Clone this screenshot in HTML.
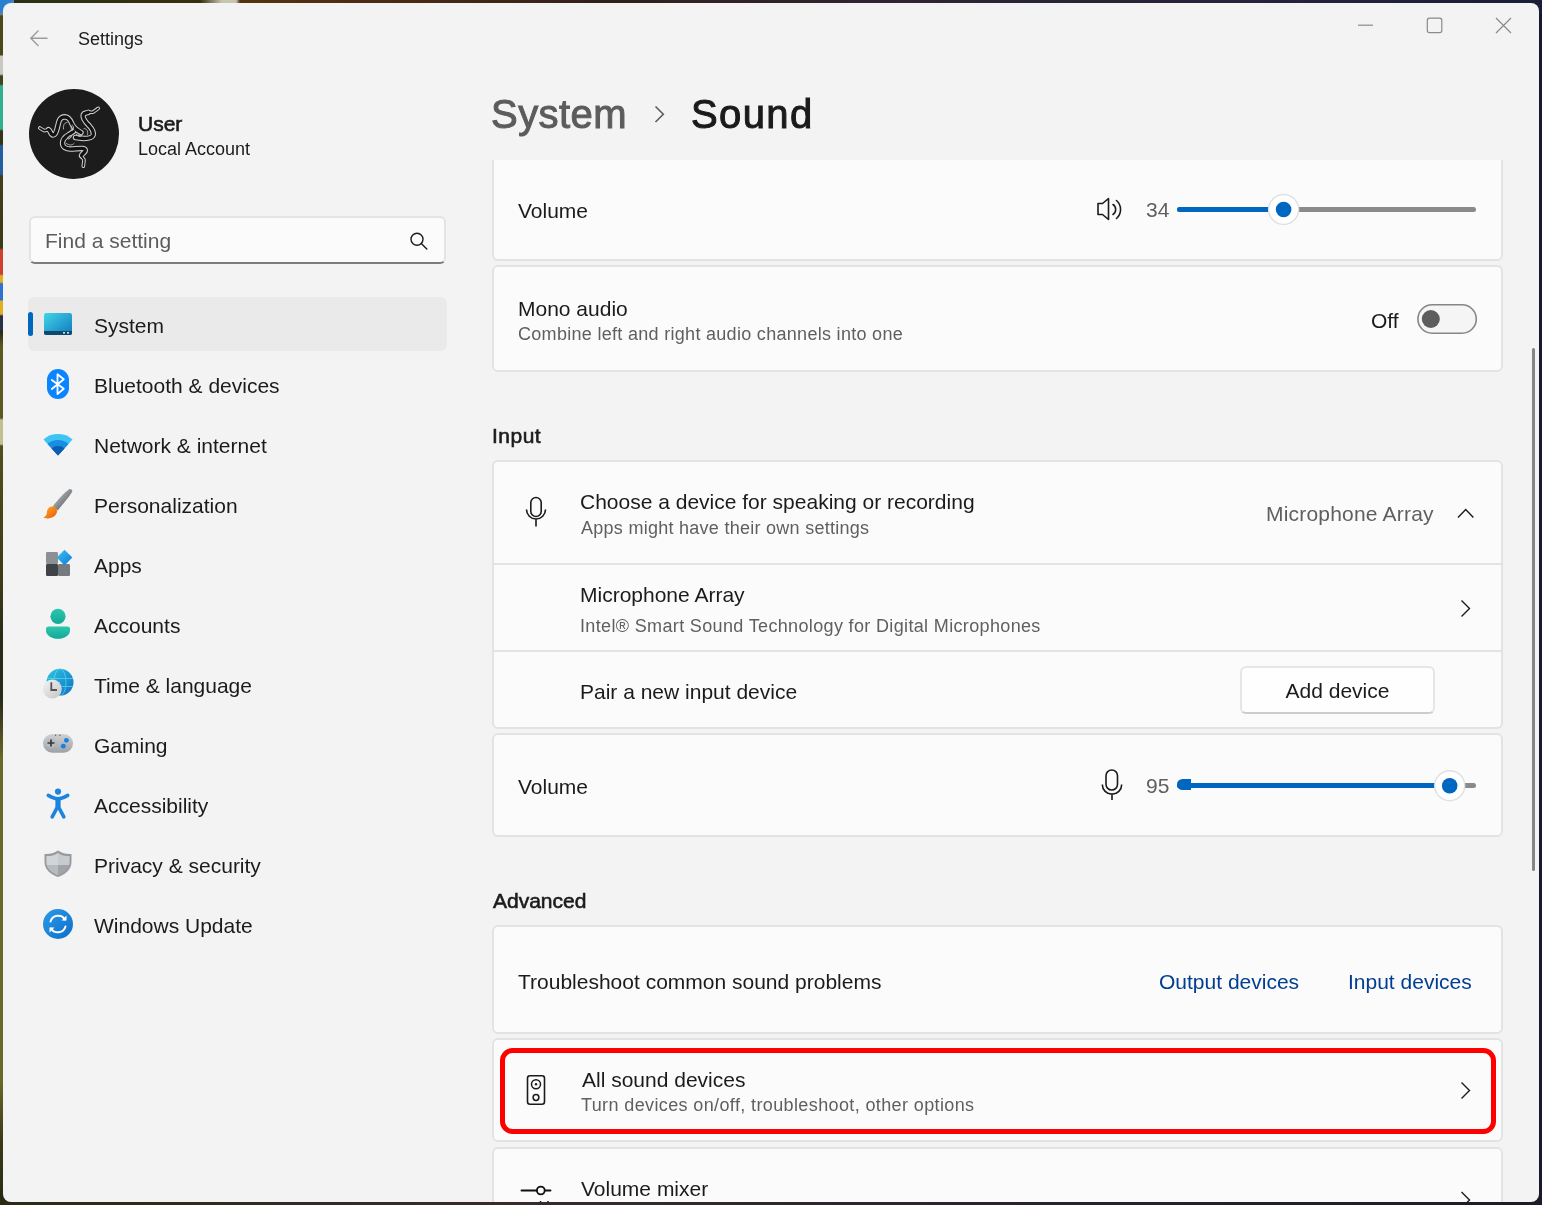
<!DOCTYPE html>
<html><head><meta charset="utf-8">
<style>
*{margin:0;padding:0;box-sizing:border-box}
html,body{width:1542px;height:1205px;overflow:hidden;background:#1d1a14;font-family:"Liberation Sans",sans-serif}
.a{position:absolute}
.t{position:absolute;will-change:transform;white-space:nowrap;line-height:1;color:#1b1b1b}
.f21{font-size:21px}
.f18{font-size:18px}
.sec{color:#5f5f5f}
.b{font-weight:bold}
#win{position:absolute;left:3px;top:3px;width:1536px;height:1199px;background:#f3f3f3;border-radius:8px;overflow:hidden}
.card{position:absolute;left:492px;width:1011px;background:#fbfbfb;border:2px solid #e3e3e3;border-radius:6px}
.div{position:absolute;left:494px;width:1007px;height:2px;background:#e3e3e3}
svg{position:absolute;overflow:visible}
</style></head><body>
<!-- desktop strips -->
<div class="a" style="left:0;top:0;width:1542px;height:4px;background:linear-gradient(90deg,#2a6ab8 0px,#2a6ab8 6px,#2c3012 10px,#34300f 200px,#c8c4b0 222px,#c8c4b0 236px,#55330f 240px,#4a2a14 400px,#32201c 600px,#2e2432 900px,#24223c 1300px,#1a1e36 1542px)"></div>
<div class="a" style="left:0;top:0;width:4px;height:1205px;background:linear-gradient(180deg,#2a80d0 0px,#8a9090 14px,#4a4a18 16px,#4a4a18 55px,#c8c8c0 56px,#c8c8c0 74px,#44441a 76px,#44441a 84px,#30b090 86px,#30b090 129px,#34341a 131px,#34341a 144px,#2060a0 146px,#2060a0 174px,#40401c 176px,#3a3a1a 248px,#d04030 250px,#d04030 274px,#e0b020 276px,#e0b020 282px,#3070d0 284px,#3070d0 300px,#e0b020 301px,#e0b020 314px,#28304a 316px,#28304a 330px,#2a2a14 332px,#5a5a20 346px,#5a5a20 418px,#c0c090 420px,#c0c090 444px,#50501c 446px,#3a3a18 590px,#2a2a18 640px,#2a2a18 700px,#6a6a28 760px,#6a6a28 1080px,#3a3a18 1140px,#2a2a14 1205px)"></div>
<div class="a" style="left:1538px;top:0;width:4px;height:1205px;background:#161a2c"></div>
<div class="a" style="left:0;top:1201px;width:1542px;height:4px;background:linear-gradient(90deg,#2a2a14,#241e18 600px,#1c1c28 1542px)"></div>
<div class="a" style="left:0;top:0;width:14px;height:14px;background:linear-gradient(135deg,#2a80d0 40%,#8a9090 80%)"></div>
<div class="a" style="left:1528px;top:0;width:14px;height:14px;background:#1a1e36"></div>
<div class="a" style="left:0;top:1190px;width:14px;height:15px;background:#2a2a14"></div>
<div class="a" style="left:1528px;top:1190px;width:14px;height:15px;background:#1c1c28"></div>
<div id="win"></div>
<!-- title bar -->
<svg style="left:0;top:0" width="1" height="1"><path d="M47.5 38.2H31M38.5 30.5L30.8 38.2L38.5 46" stroke="#9c9c9c" stroke-width="1.4" fill="none"/></svg>
<div class="t f18" style="left:78px;top:29.5px">Settings</div>
<svg style="left:0;top:0" width="1" height="1">
<path d="M1358 25.2H1373" stroke="#8a8a8a" stroke-width="1.2"/>
<rect x="1427.3" y="18.2" width="14.5" height="14.5" rx="2.2" stroke="#8a8a8a" stroke-width="1.2" fill="none"/>
<path d="M1496 18L1511 33M1511 18L1496 33" stroke="#8a8a8a" stroke-width="1.2"/>
</svg>

<!-- avatar -->
<div class="a" style="left:29px;top:89px;width:90px;height:90px;border-radius:50%;background:#1c1c1c"></div>
<svg style="left:0;top:0" width="1" height="1">
<g fill="none" stroke-linecap="round" stroke-linejoin="round">
<g stroke="#cfcfcf" stroke-width="5.4">
<path id="s1" d="M48.5 129.6C50.5 130.2 50.5 135 53 135C57 135 57.5 124 59.5 120C61 117 63 116.8 65 116.8C69 117 70.5 120 72 124C73.5 127.5 76.5 130 81 132.5"/>
<path id="s2" d="M88.3 112.3C86.5 113.3 84 112.5 83.2 115C82.3 118.5 85.5 122 89 125.5C92 128.8 94 132 93.2 135C92.2 138 88.5 138.5 84 138.5L75.5 137.5"/>
<path id="s3" d="M81.5 155.5C82 153.3 86 152.3 85.2 149.8C84.5 147.8 80 148.5 72 149C66 149.5 62.5 147 62.5 143C62.5 139 65.5 136.5 69 134.5L73.5 131.5"/>
</g>
<g stroke="#cfcfcf" stroke-width="3.6">
<path id="t1" d="M39.8 128L43.5 130.3C45.5 131.5 47 129.2 48.5 129.6"/>
<path id="t2" d="M98.3 108.3L93.5 111.8C91.5 113.2 90 111.3 88.3 112.3"/>
<path id="t3" d="M83.3 166.3L84 160C84 158 81 158 81.5 155.5"/>
</g>
<g stroke="#121212" stroke-width="3.3">
<use href="#s1"/><use href="#s2"/><use href="#s3"/>
</g>
<g stroke="#121212" stroke-width="1.6">
<use href="#t1"/><use href="#t2"/><use href="#t3"/>
</g>
<g stroke="#bbbbbb" stroke-width="0.9">
<ellipse cx="72.3" cy="127.8" rx="1.1" ry="2.6"/><ellipse cx="78.8" cy="135.2" rx="2.5" ry="1.1" transform="rotate(20 78.8 135.2)"/><ellipse cx="69.6" cy="137.2" rx="2.4" ry="1.1" transform="rotate(-40 69.6 137.2)"/>
<path d="M63.5 129C63 125 64.5 122.5 67 122.5M87.5 134.5C88.5 131 86.5 128.5 84 128.5M66.5 143.5C69 145.5 72 145.5 74 143.5"/>
</g>
</g>
</svg>
<div class="t f21" style="left:138px;top:113.2px;-webkit-text-stroke:0.6px #1b1b1b">User</div>
<div class="t f18" style="left:138px;top:140px">Local Account</div>

<!-- search -->
<div class="a" style="left:29px;top:216px;width:417px;height:48px;background:#fbfbfb;border:2px solid #e4e4e4;border-bottom:2px solid #7c7c7c;border-radius:6px"></div>
<div class="t f21" style="left:45px;top:229.8px;color:#5c5c5c">Find a setting</div>
<svg style="left:0;top:0" width="1" height="1"><circle cx="417" cy="239.3" r="6" stroke="#1b1b1b" stroke-width="1.4" fill="none"/><path d="M421.3 243.6L426.8 249" stroke="#1b1b1b" stroke-width="1.4" stroke-linecap="round"/></svg>

<!-- nav -->
<div class="a" style="left:28px;top:297px;width:419px;height:54px;background:#eaeaea;border-radius:6px"></div>
<div class="a" style="left:28px;top:312px;width:5px;height:24px;background:#0067c0;border-radius:3px"></div>
<div class="t f21" style="left:94px;top:315px">System</div>
<div class="t f21" style="left:94px;top:375px">Bluetooth &amp; devices</div>
<div class="t f21" style="left:94px;top:435px">Network &amp; internet</div>
<div class="t f21" style="left:94px;top:495px">Personalization</div>
<div class="t f21" style="left:94px;top:555px">Apps</div>
<div class="t f21" style="left:94px;top:615px">Accounts</div>
<div class="t f21" style="left:94px;top:675px">Time &amp; language</div>
<div class="t f21" style="left:94px;top:735px">Gaming</div>
<div class="t f21" style="left:94px;top:795px">Accessibility</div>
<div class="t f21" style="left:94px;top:855px">Privacy &amp; security</div>
<div class="t f21" style="left:94px;top:915px">Windows Update</div>

<svg style="left:0;top:0" width="1" height="1">
<defs>
<linearGradient id="gSys" x1="0" y1="0" x2="1" y2="1"><stop offset="0" stop-color="#3fd6e8"/><stop offset="1" stop-color="#1377bd"/></linearGradient>
<linearGradient id="gBrush" x1="0.2" y1="0.2" x2="0.8" y2="0.8"><stop offset="0" stop-color="#b4b9be"/><stop offset="1" stop-color="#5e6367"/></linearGradient>
<linearGradient id="gTip" x1="0" y1="0" x2="1" y2="1"><stop offset="0" stop-color="#ffb11f"/><stop offset="1" stop-color="#e8560e"/></linearGradient>
<linearGradient id="gAcc" x1="0" y1="0" x2="0" y2="1"><stop offset="0" stop-color="#2cc7ad"/><stop offset="1" stop-color="#14a898"/></linearGradient>
<linearGradient id="gGlobe" x1="0" y1="0" x2="1" y2="1"><stop offset="0" stop-color="#2fc7e0"/><stop offset="1" stop-color="#0f6fc6"/></linearGradient>
<linearGradient id="gClock" x1="0" y1="0" x2="1" y2="1"><stop offset="0" stop-color="#f4f4f4"/><stop offset="1" stop-color="#c4c4c4"/></linearGradient>
<linearGradient id="gPad" x1="0" y1="0" x2="0" y2="1"><stop offset="0" stop-color="#cfd2d5"/><stop offset="1" stop-color="#9ea2a6"/></linearGradient>
<linearGradient id="gShield" x1="0" y1="0" x2="1" y2="1"><stop offset="0" stop-color="#d6d9dc"/><stop offset="1" stop-color="#7d8186"/></linearGradient>
<linearGradient id="gUpd" x1="0" y1="0" x2="1" y2="1"><stop offset="0" stop-color="#2a9ae8"/><stop offset="1" stop-color="#0f6fc8"/></linearGradient>
<linearGradient id="gDia" x1="0" y1="0" x2="1" y2="1"><stop offset="0" stop-color="#3cc3f7"/><stop offset="1" stop-color="#0f78d4"/></linearGradient>
</defs>
<!-- system -->
<rect x="44" y="313" width="28" height="22" rx="2.2" fill="url(#gSys)"/>
<path d="M44 331H72V333A2 2 0 0 1 70 335H46A2 2 0 0 1 44 333Z" fill="#0e4a6c"/>
<rect x="63" y="332" width="2" height="1.6" fill="#cfe6f0"/><rect x="67" y="332" width="2" height="1.6" fill="#cfe6f0"/>
<!-- bluetooth -->
<rect x="47" y="369" width="22" height="30" rx="11" fill="#0a84ff"/>
<path d="M51.8 389L63.8 379.3L57.5 374.3V394L63.8 388.8L51.8 380" stroke="#fff" stroke-width="1.8" fill="none" stroke-linejoin="round" stroke-linecap="round"/>
<!-- wifi -->
<path d="M43.5 439.5A22 22 0 0 1 72.5 439.5L58 455.5Z" fill="#3cc4f5"/>
<path d="M47.5 444A16 16 0 0 1 68.5 444L58 455.5Z" fill="#1a8de0"/>
<path d="M51.5 448.5A10 10 0 0 1 64.5 448.5L58 455.5Z" fill="#0b5cb3"/>
<!-- brush -->
<path d="M69 489.2C70.5 488.5 72.8 489.5 72.2 491.8C70.2 495.5 63.5 503.5 57.8 510.5L52.8 506.2C58 499.5 64.5 492.5 69 489.2Z" fill="url(#gBrush)"/>
<path d="M51.8 506.6C55.3 506.3 57.3 509 57 511.8C56.5 515.5 52.5 518.4 47.5 518.4C45.5 518.4 44.3 518.2 43.5 517.8C45.3 516.5 46.6 515 46.9 513C47 509.3 48.8 506.8 51.8 506.6Z" fill="url(#gTip)"/>
<!-- apps -->
<rect x="46" y="552" width="12" height="12" rx="1.2" fill="#8c9095"/>
<rect x="46" y="564" width="12" height="12" rx="1.2" fill="#3f4347"/>
<rect x="58" y="564" width="12" height="12" rx="1.2" fill="#767a7f"/>
<path d="M64.5 549.8L72.3 557.6L64.5 565.4L56.7 557.6Z" fill="url(#gDia)"/>
<!-- accounts -->
<circle cx="58" cy="616.3" r="7.6" fill="url(#gAcc)"/>
<path d="M48.5 626.6H67.5A2.5 2.5 0 0 1 70 629.1V630.5C70 635.5 64 638.8 58 638.8C52 638.8 46 635.5 46 630.5V629.1A2.5 2.5 0 0 1 48.5 626.6Z" fill="url(#gAcc)"/>
<!-- time & language -->
<circle cx="60" cy="682.3" r="13.5" fill="url(#gGlobe)"/>
<g stroke="#5fe0f0" stroke-width="0.9" fill="none" opacity="0.75"><ellipse cx="60" cy="682.3" rx="6" ry="13.5"/><path d="M47 678.5H73M47 686.5H73"/></g>
<circle cx="52.3" cy="689" r="9.5" fill="url(#gClock)"/>
<path d="M51.3 682.3V690H57" stroke="#555" stroke-width="1.8" fill="none"/>
<!-- gaming -->
<rect x="43" y="734" width="30" height="18.7" rx="9.3" fill="url(#gPad)"/>
<circle cx="51" cy="743" r="4.8" fill="#b9bcbf"/>
<path d="M51 739.5V746.5M47.5 743H54.5" stroke="#3a3a3a" stroke-width="1.7"/>
<circle cx="66.4" cy="740.3" r="2.4" fill="#1a7ee0"/><circle cx="63.3" cy="746.2" r="2.4" fill="#1a7ee0"/>
<path d="M55 735.3H56.2M59.3 735.3H60.5" stroke="#444" stroke-width="1.1"/>
<!-- accessibility -->
<circle cx="58" cy="791.6" r="3.1" fill="#1a84e0"/>
<path d="M48.3 795.3C52 797.3 55 798.8 58 798.8C61 798.8 64 797.3 67.7 795.3" stroke="#1a84e0" stroke-width="3.6" fill="none" stroke-linecap="round"/>
<path d="M58 799V807" stroke="#1a84e0" stroke-width="5.2" fill="none"/>
<path d="M58 806L52.2 816.8M58 806L63.8 816.8" stroke="#1a84e0" stroke-width="3.6" fill="none" stroke-linecap="round"/>
<!-- shield -->
<clipPath id="shc"><path d="M58 852.9C61.8 855.3 65.5 856.2 69.6 856V862.3C69.6 868.8 64.3 873 58 875.2C51.7 873 46.4 868.8 46.4 862.3V856C50.5 856.2 54.2 855.3 58 852.9Z"/></clipPath>
<path d="M58 850.5C62 853.3 66.5 854.3 71.5 854V862C71.5 869.5 65 874.5 58 877C51 874.5 44.5 869.5 44.5 862V854C49.5 854.3 54 853.3 58 850.5Z" fill="#979b9f"/>
<g clip-path="url(#shc)"><rect x="44" y="850" width="14" height="15" fill="#d2d5d8"/><rect x="58" y="850" width="14" height="15" fill="#c8cbce"/><rect x="44" y="865" width="14" height="14" fill="#b8bbbe"/><rect x="58" y="865" width="14" height="14" fill="#a0a4a8"/></g>
<!-- windows update -->
<circle cx="58" cy="924" r="15" fill="url(#gUpd)"/>
<path d="M50.5 921.5A8 8 0 0 1 65 919.5M65.5 926.5A8 8 0 0 1 51 928.5" stroke="#fff" stroke-width="2" fill="none" stroke-linecap="round"/>
<path d="M66.5 915.5V920.5H61.5Z M49.5 932.5V927.5H54.5Z" fill="#fff"/>
</svg>
<!-- header -->
<div class="t" style="left:491px;top:94.4px;font-size:40px;color:#5c5c5c;-webkit-text-stroke:1px #5c5c5c;letter-spacing:0.45px">System</div>
<svg style="left:0;top:0" width="1" height="1"><path d="M655.5 106.5L663.3 114.2L655.5 122" stroke="#5c5c5c" stroke-width="1.6" fill="none"/></svg>
<div class="t" style="left:691px;top:94.4px;font-size:40px;color:#1a1a1a;-webkit-text-stroke:1px #1a1a1a;letter-spacing:1.4px">Sound</div>

<!-- cards -->
<div class="card" style="top:150px;height:111px"></div>
<div class="a" style="left:488px;top:148px;width:1020px;height:12px;background:#f3f3f3"></div>
<div class="card" style="top:265px;height:107px"></div>
<div class="card" style="top:460px;height:269px"></div>
<div class="div" style="top:563px"></div>
<div class="div" style="top:650px"></div>
<div class="card" style="top:733px;height:104px"></div>
<div class="card" style="top:925px;height:109px"></div>
<div class="card" style="top:1038px;height:104px"></div>
<div class="card" style="top:1147px;height:120px"></div>
<!-- volume -->
<div class="t f21" style="left:518px;top:200.2px">Volume</div>
<svg style="left:0;top:0" width="1" height="1">
<path d="M1098 203.5H1102.5L1108.5 198.5V219.5L1102.5 214.5H1098Z" stroke="#1b1b1b" stroke-width="1.6" fill="none" stroke-linejoin="round"/>
<path d="M1113 204.5A6 6 0 0 1 1113 214.5M1116.5 200.5A12 12 0 0 1 1116.5 218.5" stroke="#1b1b1b" stroke-width="1.6" fill="none" stroke-linecap="round"/>
</svg>
<div class="t f21 sec" style="left:1146px;top:199px">34</div>
<div class="a" style="left:1177px;top:206.5px;width:299px;height:5.5px;border-radius:3px;background:#8a8a8a"></div>
<div class="a" style="left:1177px;top:206.5px;width:107px;height:5.5px;border-radius:3px 0 0 3px;background:#0067c0"></div>
<svg style="left:0;top:0" width="1" height="1"><circle cx="1283.6" cy="209.5" r="15" fill="#fff" stroke="#e0e0e0" stroke-width="1.4"/><circle cx="1283.6" cy="209.5" r="7.8" fill="#0067c0"/></svg>

<!-- mono -->
<div class="t f21" style="left:517.5px;top:298.2px">Mono audio</div>
<div class="t f18 sec" style="left:517.5px;top:324.8px;letter-spacing:0.3px">Combine left and right audio channels into one</div>
<div class="t f21" style="left:1371px;top:309.7px">Off</div>
<svg style="left:0;top:0" width="1" height="1"><rect x="1417.9" y="304.8" width="58.4" height="28.4" rx="14.2" fill="#f5f5f5" stroke="#868686" stroke-width="1.6"/><circle cx="1430.8" cy="319" r="9" fill="#5d5d5d"/></svg>

<!-- input -->
<div class="t f21" style="left:492px;top:425.2px;-webkit-text-stroke:0.6px #1b1b1b;letter-spacing:0.5px">Input</div>
<svg style="left:0;top:0" width="1" height="1">
<rect x="530.8" y="497.5" width="10.4" height="19" rx="5.2" stroke="#1b1b1b" stroke-width="1.6" fill="none"/>
<path d="M526.5 509.5A9.5 9.5 0 0 0 545.5 509.5M536 519V526.5" stroke="#1b1b1b" stroke-width="1.6" fill="none"/>
</svg>
<div class="t f21" style="left:580px;top:491px">Choose a device for speaking or recording</div>
<div class="t f18 sec" style="left:580.5px;top:518.9px;letter-spacing:0.27px">Apps might have their own settings</div>
<div class="t f21 sec" style="right:108px;top:502.6px;letter-spacing:0.2px">Microphone Array</div>
<svg style="left:0;top:0" width="1" height="1"><path d="M1458 517.5L1465.7 509.5L1473.4 517.5" stroke="#1b1b1b" stroke-width="1.4" fill="none"/></svg>

<div class="t f21" style="left:580px;top:584.2px">Microphone Array</div>
<div class="t f18 sec" style="left:579.5px;top:616.8px;letter-spacing:0.35px">Intel® Smart Sound Technology for Digital Microphones</div>
<svg style="left:0;top:0" width="1" height="1"><path d="M1461.5 600.5L1469.5 608.5L1461.5 616.5" stroke="#1b1b1b" stroke-width="1.4" fill="none"/></svg>

<div class="t f21" style="left:579.5px;top:681.2px">Pair a new input device</div>
<div class="a" style="left:1240px;top:666px;width:195px;height:48px;background:#fefefe;border:2px solid #e6e6e6;border-bottom:2px solid #cdcdcd;border-radius:6px"></div>
<div class="t f21" style="left:1241px;width:193px;text-align:center;top:680.2px">Add device</div>

<!-- input volume -->
<div class="t f21" style="left:518px;top:776px">Volume</div>
<svg style="left:0;top:0" width="1" height="1">
<rect x="1106" y="770" width="11.5" height="20" rx="5.75" stroke="#1b1b1b" stroke-width="1.6" fill="none"/>
<path d="M1102.3 784.5A9.7 9.7 0 0 0 1121.7 784.5M1112 794.5V800" stroke="#1b1b1b" stroke-width="1.6" fill="none"/>
</svg>
<div class="t f21 sec" style="left:1146px;top:775px">95</div>
<div class="a" style="left:1177px;top:782.5px;width:299px;height:5.5px;border-radius:3px;background:#8a8a8a"></div>
<div class="a" style="left:1177px;top:782.5px;width:272px;height:5.5px;border-radius:3px 0 0 3px;background:#0067c0"></div>
<div class="a" style="left:1176.5px;top:779px;width:14px;height:11px;border-radius:6px 0 0 6px;background:#0067c0"></div>
<svg style="left:0;top:0" width="1" height="1"><circle cx="1449.7" cy="785.7" r="15" fill="#fff" stroke="#e0e0e0" stroke-width="1.4"/><circle cx="1449.7" cy="785.7" r="7.8" fill="#0067c0"/></svg>

<!-- advanced -->
<div class="t f21" style="left:493px;top:890.2px;-webkit-text-stroke:0.6px #1b1b1b">Advanced</div>
<div class="t f21" style="left:518px;top:971.2px">Troubleshoot common sound problems</div>
<div class="t f21" style="left:1159px;top:971.2px;color:#003e92">Output devices</div>
<div class="t f21" style="left:1348px;top:971.2px;color:#003e92">Input devices</div>

<svg style="left:0;top:0" width="1" height="1">
<rect x="527.5" y="1075.8" width="17" height="28.5" rx="2.5" stroke="#1b1b1b" stroke-width="1.6" fill="none"/>
<circle cx="536" cy="1084.3" r="4.5" stroke="#1b1b1b" stroke-width="1.5" fill="none"/>
<circle cx="536" cy="1084.3" r="1.2" fill="#1b1b1b"/>
<circle cx="536" cy="1097.5" r="2.9" stroke="#1b1b1b" stroke-width="1.5" fill="none"/>
<path d="M1461.5 1082.5L1469.5 1090.5L1461.5 1098.5" stroke="#1b1b1b" stroke-width="1.4" fill="none"/>
</svg>
<div class="t f21" style="left:582px;top:1068.8px">All sound devices</div>
<div class="t f18 sec" style="left:580.5px;top:1096.4px;letter-spacing:0.38px">Turn devices on/off, troubleshoot, other options</div>

<svg style="left:0;top:0" width="1" height="1">
<path d="M521.5 1190.5H536.8M544.8 1190.5H550.5" stroke="#111" stroke-width="1.9" stroke-linecap="round"/>
<circle cx="540.8" cy="1190.5" r="3.9" stroke="#111" stroke-width="1.8" fill="none"/>
<path d="M540.5 1201V1203M548 1201V1203" stroke="#111" stroke-width="1.5"/>
<path d="M1461.5 1192L1469.5 1200L1461.5 1208" stroke="#1b1b1b" stroke-width="1.4" fill="none"/>
</svg>
<div class="t f21" style="left:581px;top:1177.8px">Volume mixer</div>

<!-- red highlight -->
<div class="a" style="left:500px;top:1048px;width:996px;height:86px;border:5px solid #ff0000;border-radius:12.5px"></div>

<!-- scrollbar -->
<div class="a" style="left:1531.5px;top:348px;width:3px;height:523px;background:#858585;border-radius:1.5px"></div>

<!-- desktop bottom cover -->
<div class="a" style="left:0;top:1202px;width:1542px;height:3px;background:linear-gradient(90deg,#2a2a14,#3a2a2a 500px,#2a2230 1000px,#1c1c28 1542px)"></div>
</body></html>
